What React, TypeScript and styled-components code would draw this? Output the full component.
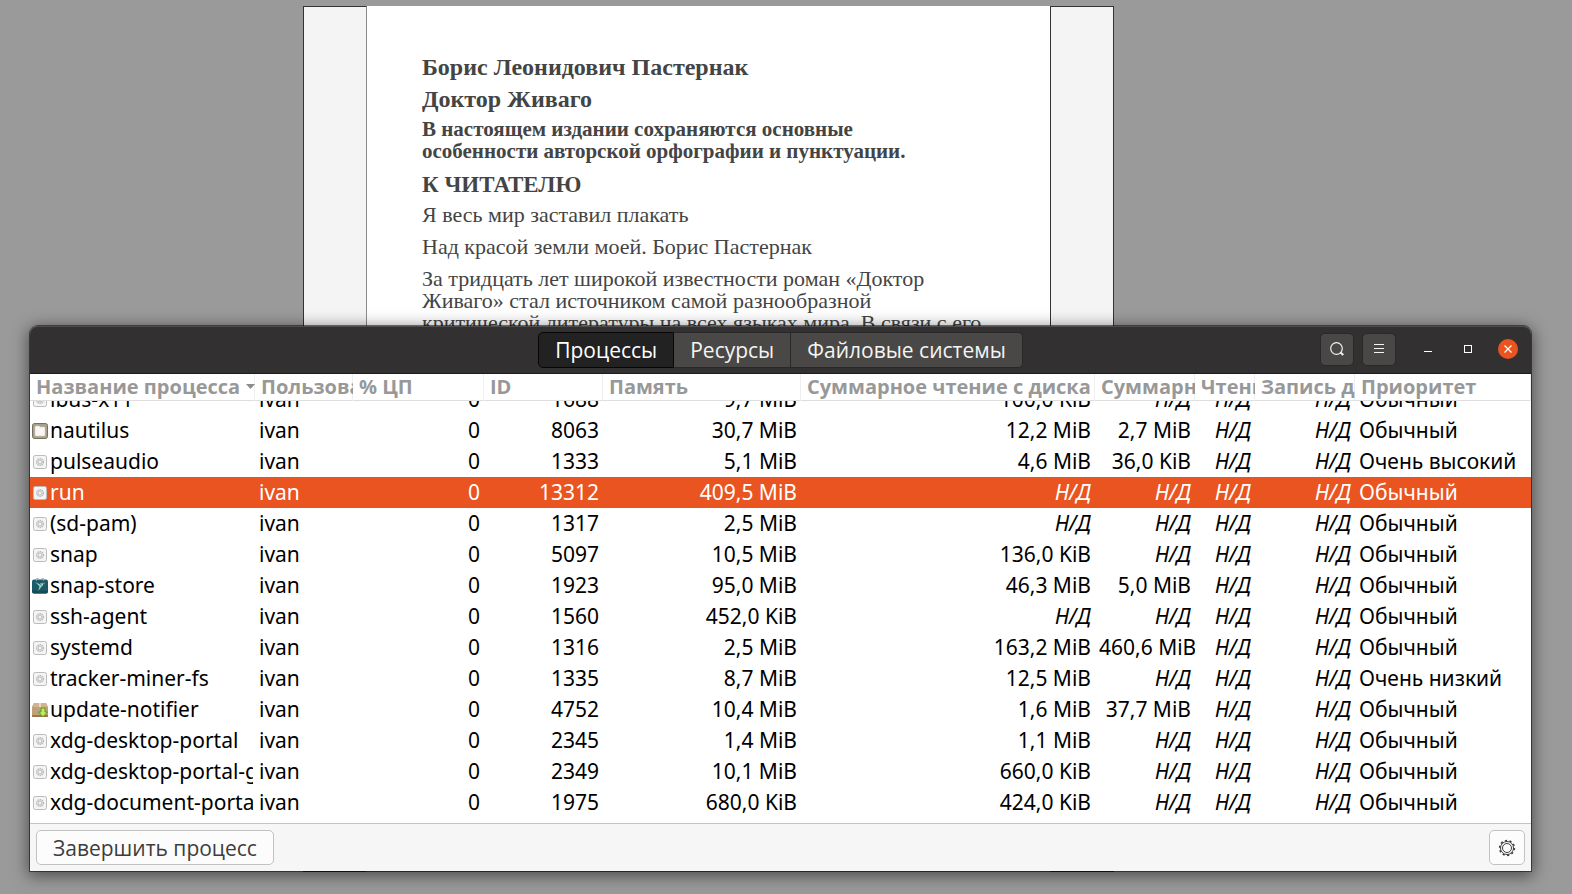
import React, { useLayoutEffect, useRef } from "react";
import styled, { createGlobalStyle, css } from "styled-components";

const uiFont = `"Noto Sans", "Open Sans", sans-serif`;
const labelFont = `"Open Sans", "Noto Sans", sans-serif`;

const GlobalStyle = createGlobalStyle`
  * { box-sizing: border-box; }
  html, body, #root { height: 100%; }
  body { margin: 0; background: #9a9a9a; overflow: hidden; }
  button { margin: 0; padding: 0; border: none; background: none; cursor: default; }
`;

const Desktop = styled.div`
  position: relative;
  display: flex;
  height: 100%;
  padding: 6px 458px 22px 303px;
`;

/* Book viewer */

const Viewer = styled.main`
  display: flex;
  flex: 1;
  min-width: 0;
  overflow: hidden;
`;

const Gutter = styled.div<{ $side: "left" | "right" }>`
  flex: 0 0 64px;
  background: #f4f4f4;
  border: 1px solid #333333;
  ${(p) => p.$side === "left" && css`border-right-color: #8c8c8c;`}
`;

const Page = styled.article`
  flex: 1;
  min-width: 0;
  padding: 48px 55px 0 55px;
  background: #ffffff;
  border-bottom: 1px solid #777777;
  color: #444444;
  font-family: "Liberation Serif", serif;
  overflow: hidden;
`;

const Title = styled.h1`
  margin: 0 0 6px;
  font-size: 24px;
  line-height: 26px;
  font-weight: 700;
`;

const Heading = styled(Title).attrs({ as: "h2" })<{ $small?: boolean }>`
  font-size: ${(p) => (p.$small ? 23 : 24)}px;
`;

const Paragraph = styled.p<{ $bold?: boolean }>`
  margin: 0 0 10px;
  font-size: ${(p) => (p.$bold ? 21 : 22)}px;
  line-height: 22px;
  font-weight: ${(p) => (p.$bold ? 700 : 400)};
  white-space: nowrap;
`;

/* System monitor window */

const Window = styled.section`
  position: absolute;
  inset: 326px 41px 23px 30px;
  display: flex;
  flex-direction: column;
  border-radius: 8px 8px 0 0;
  background: #ffffff;
  box-shadow: 0 0 0 1px rgba(0, 0, 0, 0.5), 0 3px 16px 2px rgba(0, 0, 0, 0.5);
`;

const HeaderBar = styled.header`
  display: grid;
  grid-template-columns: 1fr auto 1fr;
  align-items: center;
  flex: 0 0 48px;
  padding: 0 13px;
  border-radius: 8px 8px 0 0;
  background: #333031;
  box-shadow: inset 0 1px #4f4d4d, inset 0 -1px #1e1c1c;
`;

const Tabs = styled.nav`
  grid-column: 2;
  display: flex;
  height: 36px;
`;

const Tab = styled.button<{ $active?: boolean }>`
  padding: 0 16px;
  border: 1px solid #292828;
  border-left-width: 0;
  background: #494846;
  color: #f4f4f2;
  font-family: ${labelFont};
  font-size: 21px;
  line-height: 32px;
  white-space: nowrap;
  &:first-child { border-left-width: 1px; border-radius: 5px 0 0 5px; }
  &:last-child { border-radius: 0 5px 5px 0; }
  ${(p) => p.$active && css`
    background: #222222;
    border-color: #070707;
    color: #ffffff;
  `}
`;

const Controls = styled.div`
  display: flex;
  align-items: center;
  justify-content: flex-end;
  margin-bottom: 2px;
`;

const ToolButton = styled.button`
  display: grid;
  place-items: center;
  width: 34px;
  height: 33px;
  margin-right: 8px;
  border: 1px solid #2a2829;
  border-radius: 5px;
  background: #494846;
`;

const WindowButtons = styled.div`
  display: flex;
  gap: 20px;
  margin-left: 14px;
`;

const WindowButton = styled.button<{ $close?: boolean }>`
  display: grid;
  place-items: center;
  width: 20px;
  height: 20px;
  border-radius: 10px;
  ${(p) => p.$close && css`background: #e95420;`}
`;

const ScrollArea = styled.div`
  flex: 1;
  min-height: 0;
  padding-bottom: 6px;
  overflow: auto;
  scrollbar-width: none;
`;

const Table = styled.table`
  width: 100%;
  table-layout: fixed;
  border-collapse: separate;
  border-spacing: 0;
  font-family: ${uiFont};
  font-size: 21px;
  color: #000000;
`;

const Col = styled.col<{ $width?: number }>`
  width: ${(p) => (p.$width ? `${p.$width}px` : "auto")};
`;

const HeadCell = styled.th`
  position: sticky;
  top: 0;
  z-index: 1;
  height: 27px;
  padding: 0 0 0 6px;
  background: #ffffff;
  box-shadow: inset -1px 0 #efefef, inset 0 -1px #dedede;
  color: #989898;
  font-family: ${labelFont};
  font-size: 20px;
  line-height: 25px;
  font-weight: 700;
  text-align: left;
  vertical-align: top;
  white-space: nowrap;
  overflow: hidden;
`;

const SortLabel = styled.span`
  display: flex;
  align-items: center;
  gap: 6px;
  svg { flex: none; }
`;

const Row = styled.tr<{ $selected?: boolean }>`
  ${(p) => p.$selected && css`
    background: #e95420;
    color: #ffffff;
  `}
`;

const Cell = styled.td<{ $end?: boolean; $muted?: boolean }>`
  height: 31px;
  padding: 0 4px;
  line-height: 31px;
  text-align: ${(p) => (p.$end ? "right" : "left")};
  font-style: ${(p) => (p.$muted ? "italic" : "normal")};
  vertical-align: top;
  white-space: nowrap;
  overflow: hidden;
`;

const NameCell = styled(Cell)`
  padding: 0 2px;
`;

const NameBox = styled.div`
  display: flex;
  align-items: center;
  gap: 2px;
  overflow: hidden;
  svg { flex: none; }
`;

const ActionBar = styled.footer`
  display: flex;
  justify-content: space-between;
  flex: 0 0 48px;
  padding: 6px;
  border-top: 1px solid #c4c4c4;
  background: #f6f6f6;
`;

const ActionButton = styled.button`
  display: grid;
  place-items: center;
  min-width: 36px;
  height: 35px;
  border: 1px solid #c2c2c2;
  border-radius: 5px;
  background: #fcfcfc;
  color: #3d3d3d;
`;

const EndButton = styled(ActionButton)`
  padding: 0 16px;
  font-family: ${labelFont};
  font-size: 21px;
  line-height: 32px;
`;

type IconKind = "gear" | "files" | "store" | "update";

function ProcessIcon({ kind }: { kind: IconKind }) {
  if (kind === "files") {
    return (
      <svg width="16" height="16" viewBox="0 0 16 16" aria-hidden="true">
        <rect x=".5" y=".5" width="15" height="15" rx="2" fill="#a89f8d" stroke="#777062" />
        <path d="M3 4.200q0-1.200 1.200-1.200h3l1 1H12q1 0 1 1v7q0 1-1 1H4.200q-1.200 0-1.200-1.200z" fill="#f8f7f4" stroke="#d9d4c9" strokeWidth=".6" />
      </svg>
    );
  }
  if (kind === "store") {
    return (
      <svg width="16" height="16" viewBox="0 0 16 16" aria-hidden="true">
        <path d="M4.500 2.500V.5h2M11.500 2.500V.5h-2" fill="none" stroke="#9db7bd" strokeWidth="1" />
        <rect x="0" y="1.500" width="16" height="14" rx="2" fill="#1b5a68" />
        <path d="M0 12.500h16v1q0 2-2 2H2q-2 0-2-2z" fill="#164b57" />
        <path d="M4.500 1.500v1M11.500 1.500v1" stroke="#d5e2e4" />
        <path d="M3 4l7.500 3.600L6.200 13l1.200-4.800z" fill="#8fd0b8" />
        <path d="M8 5.300h3.300L10.800 8z" fill="#a8dcc8" />
        <path d="M9.200 4.800h4l-1 1.700z" fill="#e8623a" />
      </svg>
    );
  }
  if (kind === "update") {
    return (
      <svg width="16" height="16" viewBox="0 0 16 16" aria-hidden="true">
        <path d="M2 1h12l2 4v9q0 1-1 1H1q-1 0-1-1V5z" fill="#c0a078" />
        <path d="M2 1h12l2 4H0z" fill="#cfb48e" />
        <path d="M0 13h16v1q0 1-1 1H1q-1 0-1-1z" fill="#98774f" />
        <path d="M7 1h2v4H7z" fill="#e8d9bf" />
        <path d="M9 6h4v4h2.500L11 14.800 6.500 10H9z" fill="#c3ea5a" stroke="#5c9a26" />
      </svg>
    );
  }
  return (
    <svg width="16" height="16" viewBox="0 0 16 16" aria-hidden="true">
      <rect x="1.500" y="1.500" width="13" height="13" rx="1.800" fill="#f4f4f4" stroke="#bcbcbc" />
      <circle cx="8" cy="8" r="3.300" fill="none" stroke="#b9b9b9" strokeWidth="1.500" strokeDasharray="1.400 .7" />
      <circle cx="8" cy="8" r="1.900" fill="none" stroke="#c8c8c8" strokeWidth="1.200" />
    </svg>
  );
}

const NA = "Н/Д";

interface Process {
  name: string;
  icon?: IconKind;
  id: string;
  memory: string;
  read: string;
  written?: string;
  priority?: string;
  selected?: boolean;
}

const processes: Process[] = [
  { name: "ibus-x11", id: "1688", memory: "9,7 MiB", read: "100,0 KiB" },
  { name: "nautilus", icon: "files", id: "8063", memory: "30,7 MiB", read: "12,2 MiB", written: "2,7 MiB" },
  { name: "pulseaudio", id: "1333", memory: "5,1 MiB", read: "4,6 MiB", written: "36,0 KiB", priority: "Очень высокий" },
  { name: "run", id: "13312", memory: "409,5 MiB", read: NA, selected: true },
  { name: "(sd-pam)", id: "1317", memory: "2,5 MiB", read: NA },
  { name: "snap", id: "5097", memory: "10,5 MiB", read: "136,0 KiB" },
  { name: "snap-store", icon: "store", id: "1923", memory: "95,0 MiB", read: "46,3 MiB", written: "5,0 MiB" },
  { name: "ssh-agent", id: "1560", memory: "452,0 KiB", read: NA },
  { name: "systemd", id: "1316", memory: "2,5 MiB", read: "163,2 MiB", written: "460,6 MiB" },
  { name: "tracker-miner-fs", id: "1335", memory: "8,7 MiB", read: "12,5 MiB", priority: "Очень низкий" },
  { name: "update-notifier", icon: "update", id: "4752", memory: "10,4 MiB", read: "1,6 MiB", written: "37,7 MiB" },
  { name: "xdg-desktop-portal", id: "2345", memory: "1,4 MiB", read: "1,1 MiB" },
  { name: "xdg-desktop-portal-gtk", id: "2349", memory: "10,1 MiB", read: "660,0 KiB" },
  { name: "xdg-document-portal", id: "1975", memory: "680,0 KiB", read: "424,0 KiB" },
];

const columns: { label: string; width?: number }[] = [
  { label: "Название процесса", width: 225 },
  { label: "Пользователь", width: 98 },
  { label: "% ЦП", width: 131 },
  { label: "ID", width: 119 },
  { label: "Память", width: 198 },
  { label: "Суммарное чтение с диска", width: 294 },
  { label: "Суммарная запись на диск", width: 100 },
  { label: "Чтение с диска", width: 60 },
  { label: "Запись диска", width: 100 },
  { label: "Приоритет" },
];

function ValueCell({ value = NA }: { value?: string }) {
  return <Cell $end $muted={value === NA}>{value}</Cell>;
}

function ProcessTable() {
  const area = useRef<HTMLDivElement>(null);
  useLayoutEffect(() => {
    if (area.current) area.current.scrollTop = 17;
  }, []);
  return (
    <ScrollArea ref={area}>
      <Table>
        <colgroup>
          {columns.map((c) => <Col key={c.label} $width={c.width} />)}
        </colgroup>
        <thead>
          <tr>
            {columns.map((c, i) => (
              <HeadCell key={c.label} scope="col">
                {i === 0 ? (
                  <SortLabel>
                    {c.label}
                    <svg width="9" height="5" viewBox="0 0 9 5" aria-hidden="true"><path d="M0 0h9L4.500 5z" fill="#8c8c8c" /></svg>
                  </SortLabel>
                ) : c.label}
              </HeadCell>
            ))}
          </tr>
        </thead>
        <tbody>
          {processes.map((p) => (
            <Row key={p.name} $selected={p.selected} aria-selected={p.selected}>
              <NameCell>
                <NameBox><ProcessIcon kind={p.icon ?? "gear"} />{p.name}</NameBox>
              </NameCell>
              <Cell>ivan</Cell>
              <Cell $end>0</Cell>
              <Cell $end>{p.id}</Cell>
              <ValueCell value={p.memory} />
              <ValueCell value={p.read} />
              <ValueCell value={p.written} />
              <ValueCell />
              <ValueCell />
              <Cell>{p.priority ?? "Обычный"}</Cell>
            </Row>
          ))}
        </tbody>
      </Table>
    </ScrollArea>
  );
}

export default function App() {
  return (
    <>
      <GlobalStyle />
      <Desktop>
        <Viewer>
          <Gutter $side="left" />
          <Page>
            <Title>Борис Леонидович Пастернак</Title>
            <Heading>Доктор Живаго</Heading>
            <Paragraph $bold>
              В настоящем издании сохраняются основные<br />
              особенности авторской орфографии и пунктуации.
            </Paragraph>
            <Heading $small>К ЧИТАТЕЛЮ</Heading>
            <Paragraph>Я весь мир заставил плакать</Paragraph>
            <Paragraph>Над красой земли моей. Борис Пастернак</Paragraph>
            <Paragraph>
              За тридцать лет широкой известности роман «Доктор<br />
              Живаго» стал источником самой разнообразной<br />
              критической литературы на всех языках мира. В связи с его
            </Paragraph>
          </Page>
          <Gutter $side="right" />
        </Viewer>

        <Window>
          <HeaderBar>
            <Tabs>
              <Tab $active>Процессы</Tab>
              <Tab>Ресурсы</Tab>
              <Tab>Файловые системы</Tab>
            </Tabs>
            <Controls>
              <ToolButton aria-label="Поиск">
                <svg width="16" height="16" viewBox="0 0 16 16" fill="none" stroke="#f0f0ee">
                  <circle cx="7.500" cy="7.500" r="5.800" strokeWidth="1.200" />
                  <path d="M11.500 11.500l2.800 2.600" strokeWidth="2" />
                </svg>
              </ToolButton>
              <ToolButton aria-label="Меню">
                <svg width="16" height="16" viewBox="0 0 16 16" stroke="#f4f4f2">
                  <path d="M3 3.500h10M3 7.500h10M3 11.500h10" />
                </svg>
              </ToolButton>
              <WindowButtons>
                <WindowButton aria-label="Свернуть">
                  <svg width="16" height="16" viewBox="0 0 16 16" stroke="#ffffff"><path d="M4 10.500h8" /></svg>
                </WindowButton>
                <WindowButton aria-label="Развернуть">
                  <svg width="16" height="16" viewBox="0 0 16 16" stroke="#ffffff" fill="none"><rect x="4.500" y="4.500" width="7" height="7" /></svg>
                </WindowButton>
                <WindowButton $close aria-label="Закрыть">
                  <svg width="16" height="16" viewBox="0 0 16 16" stroke="#ffffff" strokeWidth="1.200"><path d="M4.500 4.500l7 7M11.500 4.500l-7 7" /></svg>
                </WindowButton>
              </WindowButtons>
            </Controls>
          </HeaderBar>

          <ProcessTable />

          <ActionBar>
            <EndButton>Завершить процесс</EndButton>
            <ActionButton aria-label="Свойства процесса">
              <svg width="18" height="18" viewBox="0 0 18 18" fill="none" stroke="#3d3d3d">
                <circle cx="9" cy="9" r="6.500" />
                <circle cx="9" cy="9" r="4.500" />
                <circle cx="9" cy="9" r="7.400" strokeWidth="1.500" strokeDasharray="2.200 2.450" />
              </svg>
            </ActionButton>
          </ActionBar>
        </Window>
      </Desktop>
    </>
  );
}
